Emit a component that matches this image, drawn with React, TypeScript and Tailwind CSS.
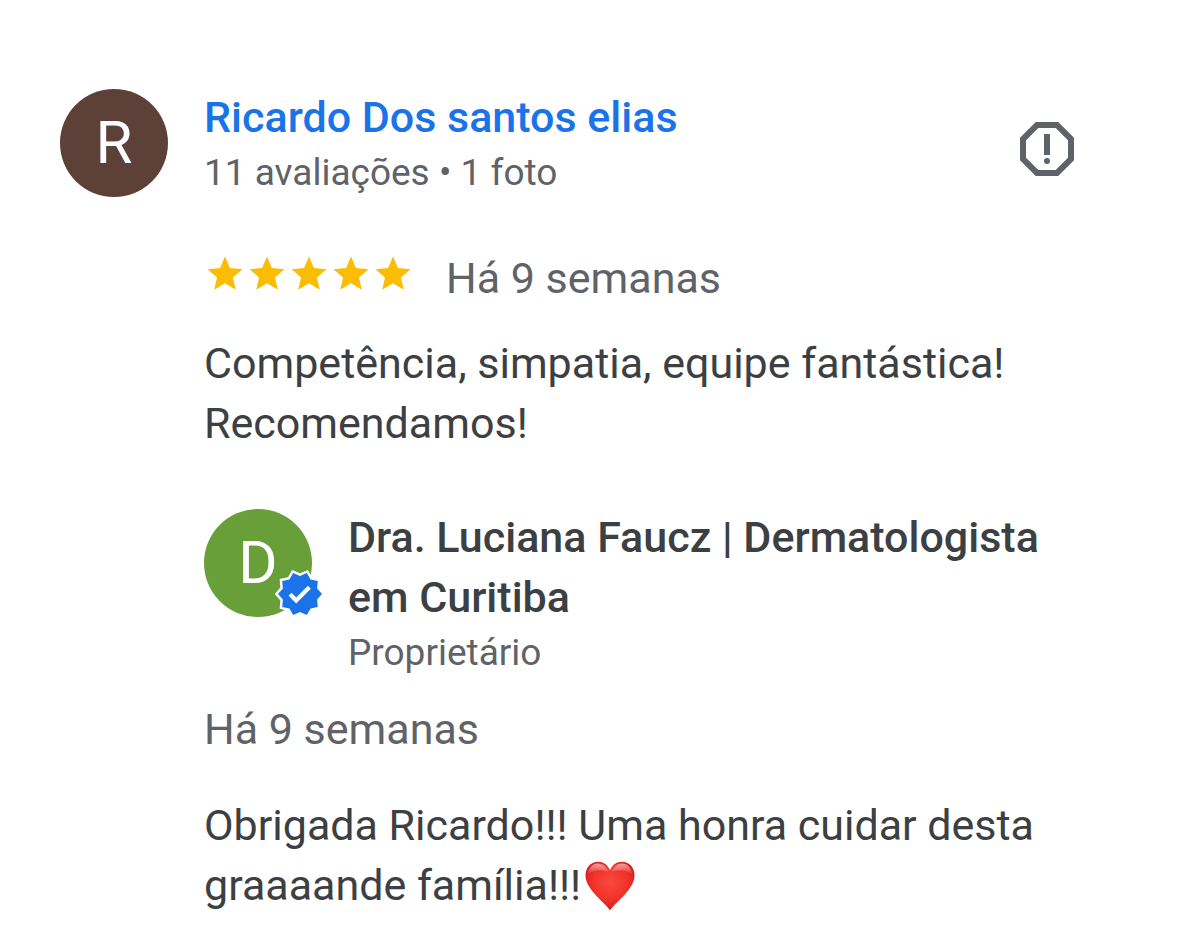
import React from "react";

interface Review {
  author: string;
  stats: string;
  rating: number;
  date: string;
  text: string;
}

interface OwnerReply {
  name: string;
  role: string;
  date: string;
  text: string;
}

const review: Review = {
  author: "Ricardo Dos santos elias",
  stats: "11 avaliações • 1 foto",
  rating: 5,
  date: "Há 9 semanas",
  text: "Competência, simpatia, equipe fantástica! Recomendamos!",
};

const reply: OwnerReply = {
  name: "Dra. Luciana Faucz | Dermatologista em Curitiba",
  role: "Proprietário",
  date: "Há 9 semanas",
  text: "Obrigada Ricardo!!! Uma honra cuidar desta graaaande família!!!",
};

const StarIcon: React.FC = () => (
  <svg viewBox="0 0 24 24" className="size-[42px] fill-[#fbbc04]" aria-hidden="true">
    <path d="M12 17.27L18.18 21l-1.64-7.03L22 9.24l-7.19-.61L12 2 9.19 8.63 2 9.24l5.46 4.73L5.82 21z" />
  </svg>
);

const ReportIcon: React.FC = () => (
  <svg viewBox="0 0 24 24" className="size-[72px] fill-[#5f6368]" aria-hidden="true">
    <path d="M15.73 3H8.27L3 8.27v7.46L8.27 21h7.46L21 15.73V8.27L15.73 3zM19 14.9L14.9 19H9.1L5 14.9V9.1L9.1 5h5.8L19 9.1v5.8z" />
    <circle cx="12" cy="16" r="1" />
    <path d="M11 7h2v7h-2z" />
  </svg>
);

const sealPath =
  "M23 12l-2.44-2.79.34-3.69-3.61-.82-1.89-3.2L12 2.96 8.6 1.5 6.71 4.69 3.1 5.5l.34 3.7L1 12l2.44 2.79-.34 3.7 3.61.82L8.6 22.5l3.4-1.47 3.4 1.46 1.89-3.19 3.61-.82-.34-3.69L23 12z";

const VerifiedBadge: React.FC = () => (
  <svg
    viewBox="0 0 24 24"
    className="absolute -right-3 -bottom-px size-12 overflow-visible"
    role="img"
    aria-label="Verificado"
  >
    <path d={sealPath} fill="#fff" stroke="#fff" strokeWidth="2.4" />
    <path d={sealPath} fill="#1a73e8" />
    <path
      d="M10.09 16.72l-3.8-3.81 1.48-1.48 2.32 2.33 5.85-5.87 1.48 1.48-7.33 7.35z"
      fill="#fff"
    />
  </svg>
);

const HeartIcon: React.FC = () => (
  <svg
    viewBox="0 0 50 50"
    className="mb-1.5 ml-1 inline-block size-[50px] align-middle"
    role="img"
    aria-label="coração"
  >
    <defs>
      <radialGradient id="heart-fill" cx="0.5" cy="0.42" r="0.6">
        <stop offset="0" stopColor="#f84a3e" />
        <stop offset="0.6" stopColor="#f0322b" />
        <stop offset="0.85" stopColor="#dd2220" />
        <stop offset="1" stopColor="#b81216" />
      </radialGradient>
      <linearGradient id="heart-shine" x1="0" y1="0" x2="0" y2="1">
        <stop offset="0" stopColor="#fff" stopOpacity="0.55" />
        <stop offset="1" stopColor="#fff" stopOpacity="0" />
      </linearGradient>
    </defs>
    <path
      d="M25 49.5C21 42 0.5 29 0.5 14.5C0.5 6.5 6 0.8 13 0.8C18.5 0.8 23 4 25 9.5C27 4 31.5 0.8 37 0.8C44 0.8 49.5 6.5 49.5 14.5C49.5 29 29 42 25 49.5Z"
      fill="url(#heart-fill)"
    />
    <path
      d="M3 14C3 7 7.500 2.500 13 2.500C18 2.500 21.500 5.500 23.500 11C19 8.500 8 8 3 14Z"
      fill="url(#heart-shine)"
    />
    <path
      d="M47 14C47 7 42.500 2.500 37 2.500C32 2.500 28.500 5.500 26.500 11C31 8.500 42 8 47 14Z"
      fill="url(#heart-shine)"
    />
  </svg>
);

const App: React.FC = () => {
  return (
    <main className="min-h-screen bg-white pt-[87px] pr-24 pb-4 pl-[60px] font-[Roboto,sans-serif] text-[43px] leading-[60px] text-[#3c4043]">
      <article className="flex items-start gap-9">
        <div className="mt-0.5 flex size-[108px] shrink-0 items-center justify-center rounded-full bg-[#5d4037] text-[60px] text-white">
          R
        </div>

        <div className="min-w-0 flex-1">
          {/* Author */}
          <header className="flex items-start justify-between">
            <div>
              <a href="#autor" className="block font-medium text-[#1a73e8]">
                {review.author}
              </a>
              <p className="mt-0.5 text-[37px] leading-[48px] text-[#5f6368]">
                {review.stats}
              </p>
            </div>
            <button type="button" aria-label="Denunciar avaliação" className="mt-[26px]">
              <ReportIcon />
            </button>
          </header>

          {/* Rating */}
          <div className="mt-[51px] flex items-center gap-8 text-[#5f6368]">
            <div className="-mt-2 flex" role="img" aria-label="5 estrelas">
              {Array.from({ length: review.rating }, (_, index) => (
                <StarIcon key={index} />
              ))}
            </div>
            <span>{review.date}</span>
          </div>

          <p className="mt-[25px]">{review.text}</p>

          {/* Owner reply */}
          <section className="mt-[54px]">
            <div className="flex items-start gap-9">
              <div className="relative mt-0.5 flex size-[108px] shrink-0 items-center justify-center rounded-full bg-[#689f38] text-[60px] text-white">
                D
                <VerifiedBadge />
              </div>
              <div className="min-w-0 flex-1">
                <h2 className="font-medium">{reply.name}</h2>
                <p className="mt-0.5 text-[37px] leading-[48px] text-[#5f6368]">
                  {reply.role}
                </p>
              </div>
            </div>
            <p className="mt-[22px] text-[#5f6368]">{reply.date}</p>
            <p className="mt-9">
              {reply.text}
              <HeartIcon />
            </p>
          </section>
        </div>
      </article>
    </main>
  );
};

export default App;
